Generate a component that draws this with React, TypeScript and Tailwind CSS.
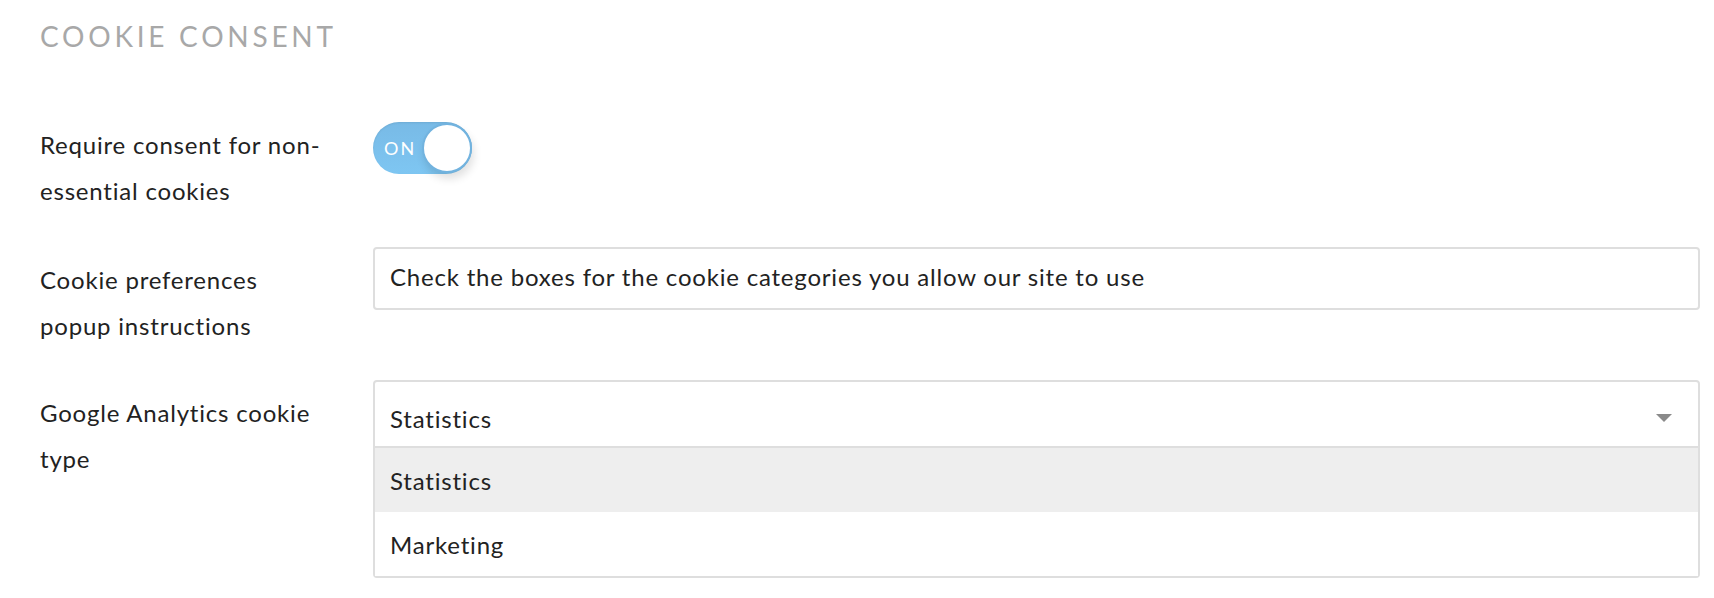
import { useState } from "react";

const font = { fontFamily: "Lato, 'Open Sans', sans-serif" };

function Toggle({ on }: { on: boolean }) {
  return (
    <div className="relative h-[52px] w-[99px] rounded-full bg-gradient-to-b from-[#78bae6] to-[#7ec6f2] shadow-[inset_0_1px_2px_rgba(0,0,0,0.08)]">
      <span className="absolute left-[11px] top-[15px] text-[18px] leading-[22px] tracking-[2px] text-white">
        {on ? "ON" : "OFF"}
      </span>
      <div className="absolute right-0 top-[1px] h-[50px] w-[50px] rounded-full border-2 border-[#72b3df] bg-white shadow-[2px_6px_8px_rgba(0,0,0,0.12)]" />
    </div>
  );
}

function Row({ label, children, pad }: { label: string; children: React.ReactNode; pad?: boolean }) {
  return (
    <div className="flex">
      <div className={`w-[333px] shrink-0 pr-[46px] text-[24px] leading-[46px] tracking-[0.8px] text-[#222] ${pad ? "pt-[10px]" : ""}`}>
        {label}
      </div>
      <div className="flex-1">{children}</div>
    </div>
  );
}

export default function App() {
  const [value] = useState("Statistics");
  const options = ["Statistics", "Marketing"];
  return (
    <div className="min-h-[598px] bg-white pl-[40px] pr-[14px]" style={font}>
      <h2 className="pt-[22px] text-[28px] leading-none tracking-[3.75px] text-[#a8a8a8]">COOKIE CONSENT</h2>

      <div className="mt-[72px]">
        <Row label="Require consent for non-essential cookies">
          <Toggle on />
        </Row>
      </div>

      <div className="mt-[33px]">
        <Row label="Cookie preferences popup instructions" pad>
          <div className="flex h-[63px] items-center rounded-[4px] border-2 border-[#dedede] px-[15px] pb-[4px] text-[24px] tracking-[0.8px] text-[#222]">
            Check the boxes for the cookie categories you allow our site to use
          </div>
        </Row>
      </div>

      <div className="mt-[31px]">
        <Row label="Google Analytics cookie type" pad>
          <div className="rounded-[4px] border-2 border-[#dedede] text-[24px] tracking-[0.8px] text-[#222]">
            <div className="flex h-[66px] items-center justify-between border-b-2 border-[#dedede] pl-[15px] pr-[26px] pt-[9px]">
              <span>{value}</span>
              <svg width="16" height="8" viewBox="0 0 16 8" className="-mt-[1px]">
                <path d="M0 0 H16 L8 8 Z" fill="#8a8a8a" />
              </svg>
            </div>
            {options.map((o, i) => (
              <div
                key={o}
                className={`flex h-[64px] items-center pl-[15px] pt-[1px] ${i === 0 ? "bg-[#eeeeee]" : "bg-white"}`}
              >
                {o}
              </div>
            ))}
          </div>
        </Row>
      </div>
    </div>
  );
}
